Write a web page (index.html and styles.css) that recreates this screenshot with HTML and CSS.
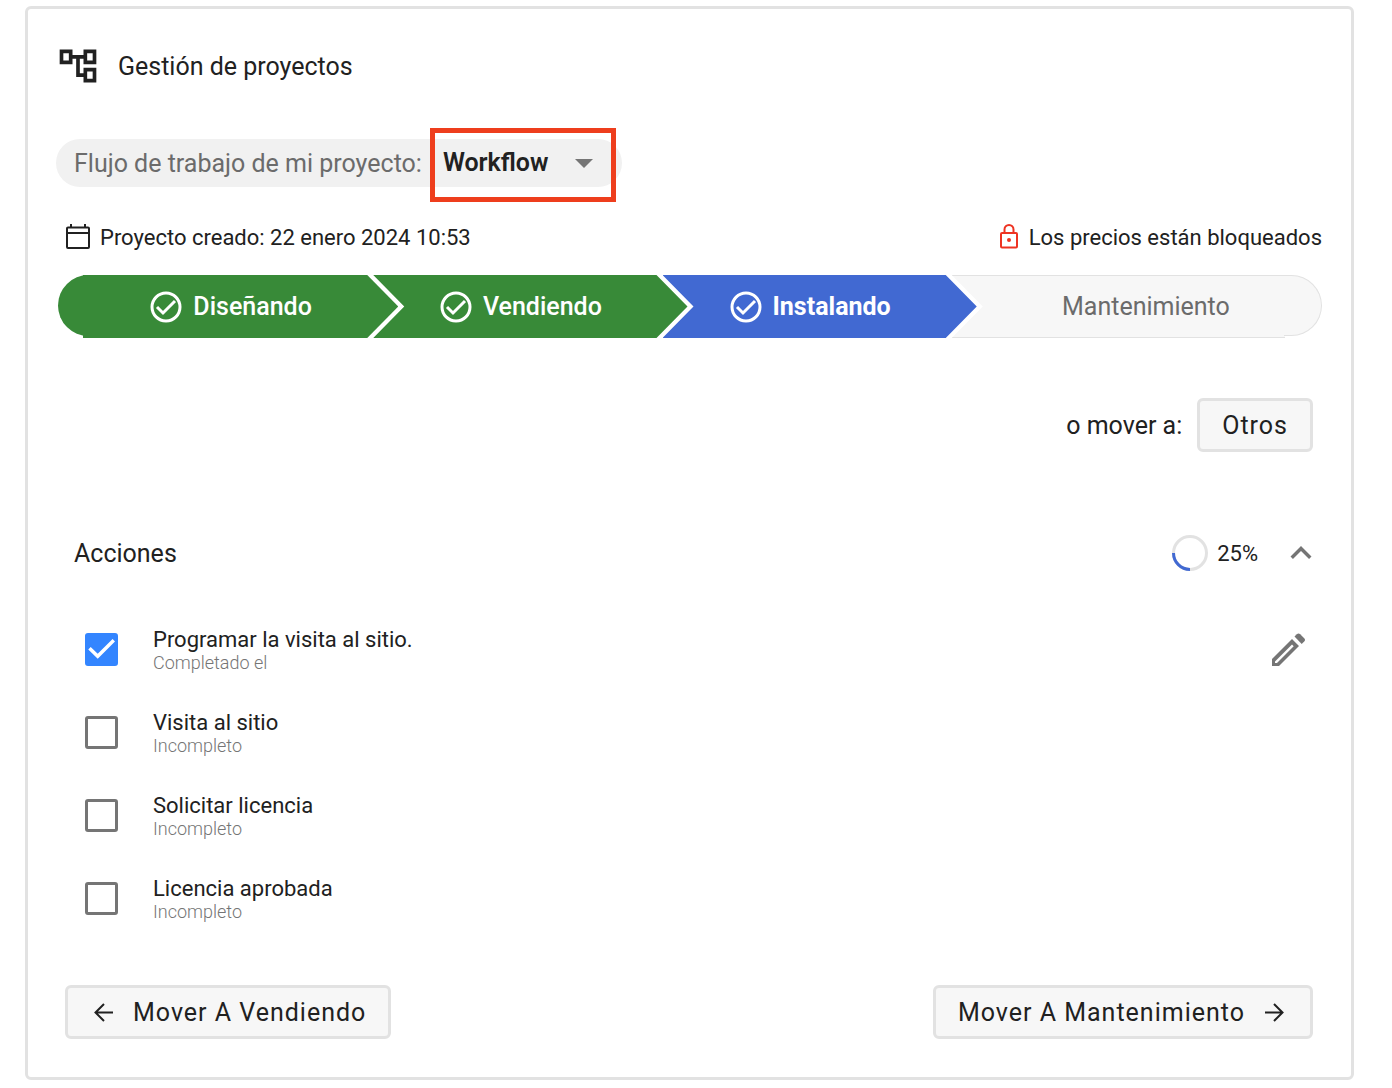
FILE: index.html
```html
<!DOCTYPE html>
<html lang="es">
<head>
<meta charset="UTF-8">
<title>Gestión de proyectos</title>
<link rel="stylesheet" href="styles.css">
</head>
<body>
<main class="card">

  <header class="card-header">
    <svg class="icon-tree" viewBox="0 0 24 24"><path d="M22 11V3h-7v3H9V3H2v8h7V8h2v10h4v3h7v-8h-7v3h-2V8h2v3h7zM7 9H4V5h3v4zm10 6h3v4h-3v-4zm0-10h3v4h-3V5z"/></svg>
    <h1>Gestión de proyectos</h1>
  </header>

  <div class="workflow">
    <label for="workflow">Flujo de trabajo de mi proyecto:</label>
    <div class="workflow-select">
      <select id="workflow">
        <option>Workflow</option>
      </select>
      <svg class="icon-caret" viewBox="0 0 18 9"><path d="M0 0h18l-9 9z"/></svg>
    </div>
  </div>

  <div class="info">
    <div class="info-item">
      <svg class="icon-calendar" viewBox="0 0 24 26"><path d="M2 3.5h20a1 1 0 0 1 1 1V23a1 1 0 0 1-1 1H2a1 1 0 0 1-1-1V4.500a1 1 0 0 1 1-1zM1 9h22M5 0v4M19 0v4"/></svg>
      <span>Proyecto creado: 22 enero 2024 10:53</span>
    </div>
    <div class="info-item">
      <svg class="icon-lock" viewBox="0 0 20 26"><path d="M3 9h14a1 1 0 0 1 1 1v12.500a1 1 0 0 1-1 1H3a1 1 0 0 1-1-1V10a1 1 0 0 1 1-1zM5.500 9V5.500a4.500 4.500 0 0 1 9 0V9"/><circle cx="10" cy="16" r="2"/></svg>
      <span>Los precios están bloqueados</span>
    </div>
  </div>

  <ol class="steps">
    <li class="step step-first">
      <svg class="icon-done" viewBox="0 0 32 32"><circle cx="16" cy="16" r="14"/><path d="M7 16l6 6L25 10"/></svg>
      <span>Diseñando</span>
    </li>
    <li class="step">
      <svg class="icon-done" viewBox="0 0 32 32"><circle cx="16" cy="16" r="14"/><path d="M7 16l6 6L25 10"/></svg>
      <span>Vendiendo</span>
    </li>
    <li class="step step-current">
      <svg class="icon-done" viewBox="0 0 32 32"><circle cx="16" cy="16" r="14"/><path d="M7 16l6 6L25 10"/></svg>
      <span>Instalando</span>
    </li>
    <li class="step step-last">
      <span>Mantenimiento</span>
    </li>
  </ol>

  <div class="move">
    <span>o mover a:</span>
    <button type="button" class="btn">Otros</button>
  </div>

  <section>
    <div class="actions-header">
      <h2>Acciones</h2>
      <svg class="ring" viewBox="0 0 36 36"><circle cx="18" cy="18" r="16.500"/><path d="M18 34.500A16.500 16.500 0 0 1 1.500 18"/></svg>
      <span class="percent">25%</span>
      <button type="button" class="icon-btn" aria-label="Contraer">
        <svg class="icon-chevron" viewBox="0 0 24 24"><path d="M12 8l-6 6 1.410 1.410L12 10.830l4.590 4.580L18 14z"/></svg>
      </button>
    </div>

    <ul class="actions">
      <li class="action">
        <input type="checkbox" id="action1" checked>
        <label for="action1">Programar la visita al sitio.<small>Completado el</small></label>
        <button type="button" class="icon-btn edit" aria-label="Editar">
          <svg class="icon-pencil" viewBox="0 0 34 34"><path d="M0 26v7h7l20-20-7-7zM3 28.500L20 11.500l1.700 1.700L5 30H3z" fill-rule="evenodd"/><path d="M22.500 3.500l2.300-2.300q1.700-1.600 3.400 0l4 4q1.600 1.700 0 3.400l-2.500 2.300z"/></svg>
        </button>
      </li>
      <li class="action">
        <input type="checkbox" id="action2">
        <label for="action2">Visita al sitio<small>Incompleto</small></label>
      </li>
      <li class="action">
        <input type="checkbox" id="action3">
        <label for="action3">Solicitar licencia<small>Incompleto</small></label>
      </li>
      <li class="action">
        <input type="checkbox" id="action4">
        <label for="action4">Licencia aprobada<small>Incompleto</small></label>
      </li>
    </ul>
  </section>

  <footer class="card-footer">
    <button type="button" class="btn">
      <svg class="icon-arrow" viewBox="0 0 27 27"><path d="M23 13.500H6M14 5l-8.500 8.500L14 22"/></svg>
      Mover A Vendiendo
    </button>
    <button type="button" class="btn">
      Mover A Mantenimiento
      <svg class="icon-arrow" viewBox="0 0 27 27"><path d="M4 13.500h17M13 5l8.500 8.500L13 22"/></svg>
    </button>
  </footer>

</main>
</body>
</html>
```
FILE: styles.css
```css
* {
  box-sizing: border-box;
}

body {
  margin: 0;
  background: #fff;
  color: #212121;
  font-family: Roboto, sans-serif;
  font-size: 22px;
}

h1, h2 {
  margin: 0;
  font-size: 25px;
  font-weight: 400;
}

svg {
  display: block;
  flex: none;
}

.card {
  margin: 6px 38px 8px 25px;
  padding: 35px 29px 38px 28px;
  border: 3px solid #e2e2e2;
  border-radius: 6px;
}

.card-header {
  display: flex;
  align-items: center;
  gap: 18px;
}

.icon-tree {
  width: 44px;
  height: 44px;
  fill: #212121;
}

/* Workflow picker */
.workflow {
  display: inline-flex;
  align-items: center;
  height: 48px;
  margin-top: 51px;
  padding: 0 29px 0 18px;
  border-radius: 24px;
  background: #f1f1f1;
  color: #6b6b6b;
  font-size: 25px;
}

.workflow-select {
  position: relative;
  display: flex;
  align-items: center;
  margin-left: 21px;
}

/* red frame around the select */
.workflow-select::after {
  content: "";
  position: absolute;
  top: -22px;
  bottom: -26px;
  left: -13px;
  right: -23px;
  border: 5px solid #ee3e1d;
  pointer-events: none;
}

.workflow-select select {
  appearance: none;
  height: 26px;
  padding: 0 44px 0 0;
  border: 0;
  background: none;
  color: #212121;
  font: 600 25px/26px Roboto, sans-serif;
}

.icon-caret {
  position: absolute;
  right: 0;
  width: 18px;
  height: 9px;
  fill: #757575;
  pointer-events: none;
}

/* Created date / locked prices */
.info {
  display: flex;
  justify-content: space-between;
  height: 30px;
  margin-top: 35px;
  padding-left: 10px;
}

.info-item {
  display: flex;
  align-items: center;
  gap: 10px;
}

.icon-calendar {
  width: 24px;
  height: 26px;
  fill: none;
  stroke: #212121;
  stroke-width: 2;
}

.icon-lock {
  width: 20px;
  height: 26px;
  fill: none;
  stroke: #ee3322;
  stroke-width: 2;
}

.icon-lock circle {
  fill: #ee3322;
  stroke: none;
}

/* Steps */
.steps {
  display: flex;
  height: 63px;
  margin: 23px 0 0 2px;
  padding: 0;
  list-style: none;
}

.step {
  position: relative;
  display: flex;
  flex: 1 1 314px;
  align-items: center;
  justify-content: center;
  gap: 11px;
  margin-left: -25px;
  padding-right: 19px;
  background: #388a38;
  color: #fff;
  font-size: 25px;
  font-weight: 500;
  clip-path: polygon(0 0, calc(100% - 31px) 0, 100% 50%, calc(100% - 31px) 100%, 0 100%, 31px 50%);
}

.step-first {
  flex-basis: 340px;
  margin-left: 0;
  padding: 0 0 0 6px;
  background: none;
  clip-path: polygon(0 0, calc(100% - 31px) 0, 100% 50%, calc(100% - 31px) 100%, 0 100%);
}

.step-first::before {
  content: "";
  position: absolute;
  z-index: -1;
  top: 0;
  bottom: 2px;
  left: 0;
  width: 60px;
  border-radius: 31px 0 0 31px;
  background: #388a38;
}

.step-first::after {
  content: "";
  position: absolute;
  z-index: -1;
  top: 0;
  bottom: 0;
  left: 25px;
  right: 0;
  background: #388a38;
}

.step-current {
  background: #4169d2;
  font-weight: 700;
}

.step-last {
  flex-basis: 370px;
  padding: 0 0 0 18px;
  background: none;
  color: #6b6b6b;
  font-weight: 400;
  clip-path: none;
}

.step-last::before {
  content: "";
  position: absolute;
  z-index: -1;
  top: 0;
  bottom: 0;
  left: 0;
  right: 37px;
  border: solid #e2e2e2;
  border-width: 1px 0;
  background: #f7f7f7;
  clip-path: polygon(0 0, 100% 0, 100% 100%, 0 100%, 31px 50%);
}

.step-last::after {
  content: "";
  position: absolute;
  z-index: -1;
  top: 0;
  bottom: 2px;
  right: 0;
  width: 37px;
  border: 1px solid #e2e2e2;
  border-left: 0;
  border-radius: 0 31px 31px 0;
  background: #f7f7f7;
}

.icon-done {
  width: 32px;
  height: 32px;
  fill: none;
  stroke: #fff;
  stroke-width: 3;
}

/* Buttons */
.btn {
  display: flex;
  align-items: center;
  gap: 16px;
  height: 54px;
  padding: 0 22px;
  border: 3px solid #e2e2e2;
  border-radius: 6px;
  background: #f7f7f7;
  color: #212121;
  font: 400 25px Roboto, sans-serif;
  letter-spacing: 1px;
}

.icon-btn {
  padding: 0;
  border: 0;
  background: none;
}

.icon-arrow {
  width: 27px;
  height: 27px;
  fill: none;
  stroke: #212121;
  stroke-width: 2;
}

.move {
  display: flex;
  align-items: center;
  justify-content: flex-end;
  gap: 15px;
  margin-top: 60px;
  padding-right: 9px;
  font-size: 25px;
}

/* Actions */
.actions-header {
  display: flex;
  align-items: center;
  height: 36px;
  margin-top: 83px;
  padding-left: 18px;
}

.ring {
  width: 36px;
  height: 36px;
  margin-left: auto;
  fill: none;
  stroke: #e2e2e2;
  stroke-width: 3;
}

.ring path {
  stroke: #4169d2;
}

.percent {
  margin: 0 22px 0 9px;
}

.icon-chevron {
  width: 42px;
  height: 42px;
  fill: #757575;
}

.actions {
  margin: 37px 0 0;
  padding: 0 16px 0 29px;
  list-style: none;
}

.action {
  display: flex;
  align-items: center;
  gap: 35px;
  height: 83px;
}

.action input {
  appearance: none;
  width: 33px;
  height: 33px;
  margin: 0;
  border: 3px solid #757575;
  border-radius: 3px;
}

.action input:checked {
  border-color: #3385ff;
  background: #3385ff;
}

.action input:checked::before {
  content: "";
  display: block;
  height: 100%;
  background: #fff;
  clip-path: polygon(10% 41%, 36% 66%, 91% 11%, 100% 20%, 36% 84%, 1% 50%);
}

.action label {
  line-height: 26px;
}

.action small {
  display: block;
  color: #757575;
  font-size: 18px;
  font-weight: 300;
  line-height: 20px;
}

.edit {
  margin-left: auto;
}

.icon-pencil {
  width: 34px;
  height: 34px;
  fill: #757575;
}

.card-footer {
  display: flex;
  justify-content: space-between;
  margin-top: 45px;
  padding: 0 9px;
}
```
